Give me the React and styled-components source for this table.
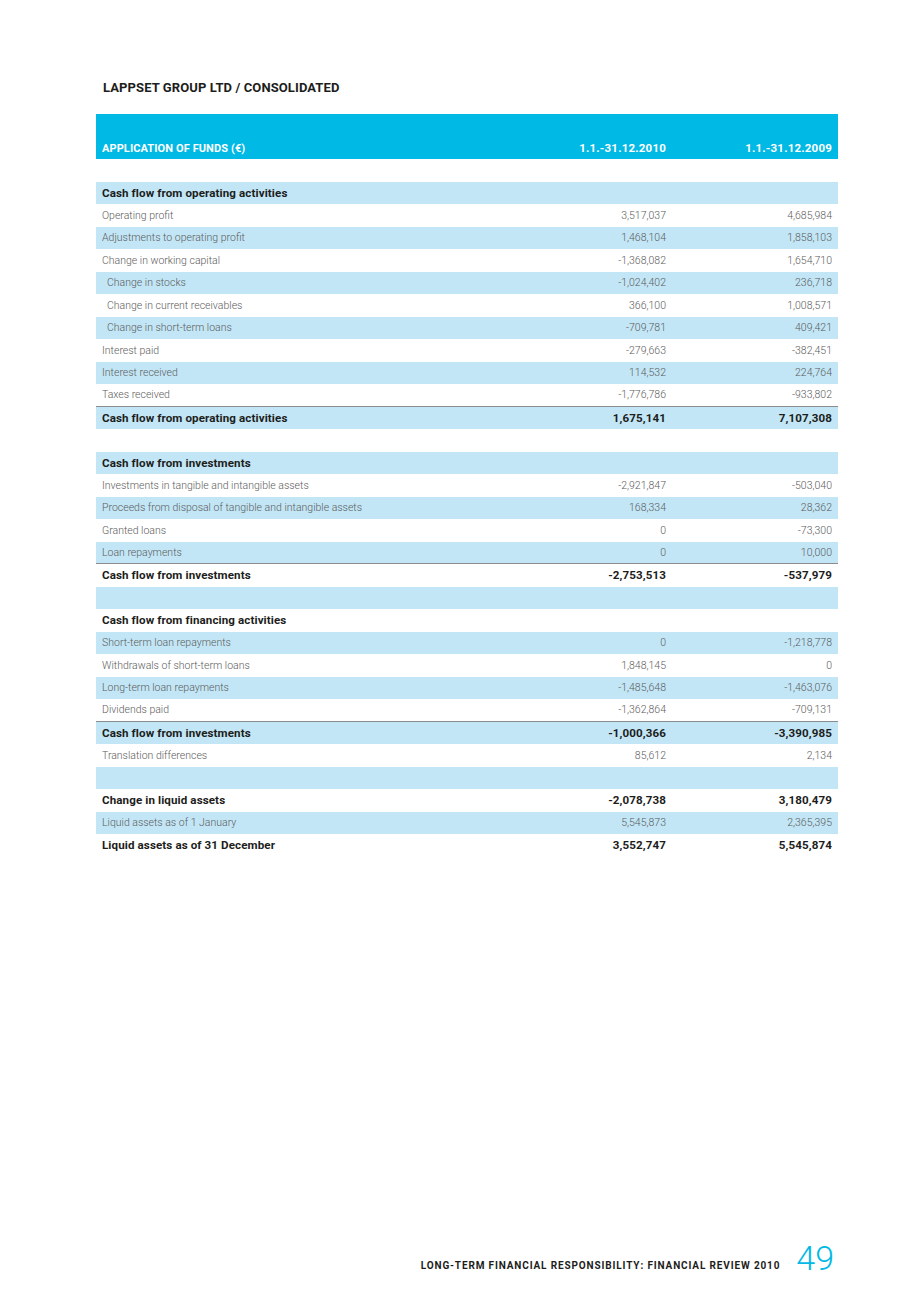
import React from "react";
import styled, { createGlobalStyle } from "styled-components";

const Global = createGlobalStyle`
  html, body { margin: 0; padding: 0; background: #fff; }
  body { font-family: Roboto, "Open Sans", sans-serif; }
`;

const Page = styled.div`
  width: 920px;
  min-height: 1301px;
  box-sizing: border-box;
  display: flex;
  flex-direction: column;
  padding: 80px 82px 28px 96px;
`;

const Title = styled.h1`
  margin: 0 0 0 7px;
  font-size: 13px;
  font-weight: 700;
  color: #1d1d1b;
  letter-spacing: 0.1px;
  line-height: 16px;
`;

const Table = styled.div`
  margin-top: 18px;
  width: 742px;
  display: flex;
  flex-direction: column;
`;

const HeaderRow = styled.div`
  display: grid;
  grid-template-columns: 1fr 166px 166px;
  height: 45px;
  align-items: end;
  background: #00b9e4;
  color: #fff;
  font-size: 11px;
  font-weight: 700;
  padding-bottom: 4px;
  box-sizing: border-box;
`;

const HCell = styled.div`
  padding: 0 6px;
  text-align: ${(p) => (p.$num ? "right" : "left")};
  letter-spacing: ${(p) => (p.$num ? "0.2px" : "0.1px")};
  font-size: ${(p) => (p.$num ? "11.5px" : "11px")};
`;

const Row = styled.div`
  display: grid;
  grid-template-columns: 1fr 166px 166px;
  height: 22.5px;
  align-items: center;
  box-sizing: border-box;
  background: ${(p) => (p.$blue ? "#c2e6f6" : "#fff")};
  border-bottom: ${(p) => (p.$rule ? "1px solid #8c8c8c" : "none")};
  color: ${(p) => (p.$bold ? "#1d1d1b" : "#5c5c5c")};
  font-weight: ${(p) => (p.$bold ? 700 : 300)};
  font-size: ${(p) => (p.$bold ? "11.6px" : "10.5px")};
  letter-spacing: ${(p) => (p.$bold ? "0.1px" : "0")};
`;

const Label = styled.div`
  padding-left: ${(p) => (p.$indent ? 11 : 6)}px;
  white-space: nowrap;
`;

const Num = styled.div`
  padding-right: 6px;
  text-align: right;
`;

const Footer = styled.footer`
  margin-top: auto;
  display: flex;
  justify-content: flex-end;
  align-items: flex-end;
  gap: 16px;
  padding-right: 4px;
`;

const FooterText = styled.span`
  font-size: 10px;
  font-weight: 700;
  letter-spacing: 0.86px;
  color: #1d1d1b;
  line-height: 12px;
  margin-bottom: 1px;
`;

const PageNum = styled.span`
  font-size: 34px;
  font-weight: 300;
  color: #00b9e4;
  line-height: 30px;
`;

const rows = [
  { blank: true },
  { l: "Cash flow from operating activities", bold: true },
  { l: "Operating profit", a: "3,517,037", b: "4,685,984" },
  { l: "Adjustments to operating profit", a: "1,468,104", b: "1,858,103" },
  { l: "Change in working capital", a: "-1,368,082", b: "1,654,710" },
  { l: "Change in stocks", a: "-1,024,402", b: "236,718", indent: true },
  { l: "Change in current receivables", a: "366,100", b: "1,008,571", indent: true },
  { l: "Change in short-term loans", a: "-709,781", b: "409,421", indent: true },
  { l: "Interest paid", a: "-279,663", b: "-382,451" },
  { l: "Interest received", a: "114,532", b: "224,764" },
  { l: "Taxes received", a: "-1,776,786", b: "-933,802", rule: true },
  { l: "Cash flow from operating activities", a: "1,675,141", b: "7,107,308", bold: true },
  { blank: true },
  { l: "Cash flow from investments", bold: true },
  { l: "Investments in tangible and intangible assets", a: "-2,921,847", b: "-503,040" },
  { l: "Proceeds from disposal of tangible and intangible assets", a: "168,334", b: "28,362" },
  { l: "Granted loans", a: "0", b: "-73,300" },
  { l: "Loan repayments", a: "0", b: "10,000", rule: true },
  { l: "Cash flow from investments", a: "-2,753,513", b: "-537,979", bold: true },
  { blank: true },
  { l: "Cash flow from financing activities", bold: true },
  { l: "Short-term loan repayments", a: "0", b: "-1,218,778" },
  { l: "Withdrawals of short-term loans", a: "1,848,145", b: "0" },
  { l: "Long-term loan repayments", a: "-1,485,648", b: "-1,463,076" },
  { l: "Dividends paid", a: "-1,362,864", b: "-709,131", rule: true },
  { l: "Cash flow from investments", a: "-1,000,366", b: "-3,390,985", bold: true },
  { l: "Translation differences", a: "85,612", b: "2,134" },
  { blank: true },
  { l: "Change in liquid assets", a: "-2,078,738", b: "3,180,479", bold: true },
  { l: "Liquid assets as of 1 January", a: "5,545,873", b: "2,365,395" },
  { l: "Liquid assets as of 31 December", a: "3,552,747", b: "5,545,874", bold: true },
];

export default function App() {
  return (
    <>
      <Global />
      <Page>
        <Title>LAPPSET GROUP LTD / CONSOLIDATED</Title>
        <Table>
          <HeaderRow>
            <HCell>APPLICATION OF FUNDS (€)</HCell>
            <HCell $num>1.1.-31.12.2010</HCell>
            <HCell $num>1.1.-31.12.2009</HCell>
          </HeaderRow>
          {rows.map((r, i) => (
            <Row key={i} $blue={i % 2 === 1} $bold={r.bold} $rule={r.rule}>
              <Label $indent={r.indent}>{r.l || ""}</Label>
              <Num>{r.a || ""}</Num>
              <Num>{r.b || ""}</Num>
            </Row>
          ))}
        </Table>
        <Footer>
          <FooterText>LONG-TERM FINANCIAL RESPONSIBILITY: FINANCIAL REVIEW 2010</FooterText>
          <PageNum>49</PageNum>
        </Footer>
      </Page>
    </>
  );
}
